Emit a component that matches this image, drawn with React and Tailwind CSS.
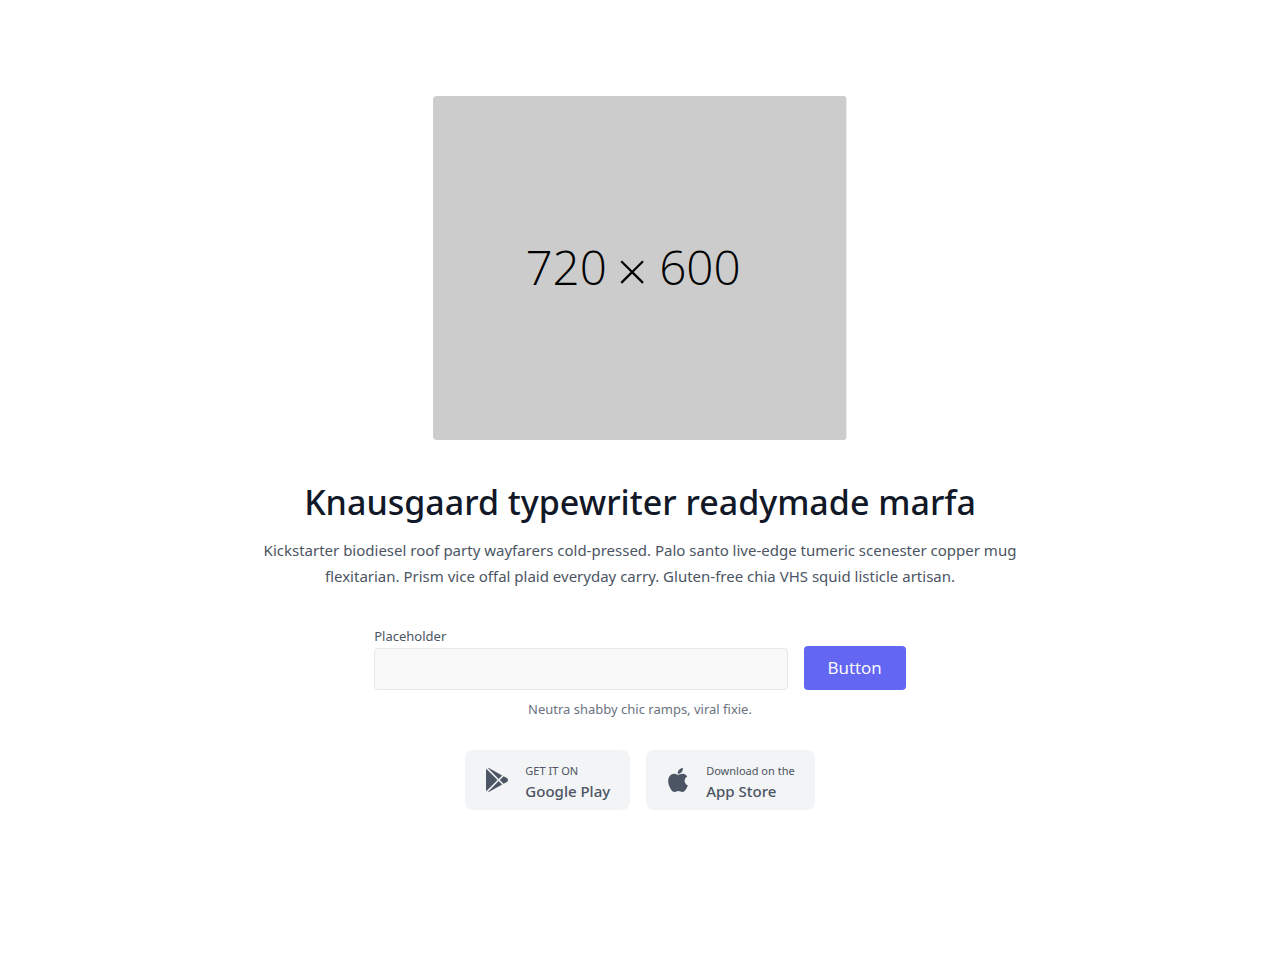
import React from "react";

function PlaceholderImage() {
  return (
    <svg
      viewBox="0 0 720 600"
      role="img"
      aria-label="hero"
      className="mb-10 block w-5/6 rounded md:w-3/6 lg:w-2/6"
    >
      <rect width="720" height="600" fill="#cccccc" />
      <g fontSize="83" fill="#000000" className="font-['Open_Sans','Noto_Sans',sans-serif] font-light">
        <text x="161" y="330">
          720
        </text>
        <text x="347" y="339" fontSize="94" textAnchor="middle">
          ×
        </text>
        <text x="536" y="330" textAnchor="end">
          600
        </text>
      </g>
    </svg>
  );
}

function GooglePlayIcon() {
  return (
    <svg viewBox="0 0 512 512" fill="currentColor" className="h-6 w-6 shrink-0" aria-hidden="true">
      <path d="M99.617 8.057a50.191 50.191 0 00-38.815-6.713l230.932 230.933 74.846-74.846L99.617 8.057zM32.139 20.116c-6.441 8.563-10.148 19.077-10.148 30.199v411.358c0 11.123 3.708 21.636 10.148 30.199l235.877-235.877L32.139 20.116zM464.261 212.087l-67.266-37.637-81.544 81.544 81.548 81.548 67.273-37.64c16.117-9.03 25.738-25.442 25.738-43.908s-9.621-34.877-25.749-43.907zM291.733 279.711L60.815 510.629c3.786.891 7.639 1.371 11.492 1.371a50.275 50.275 0 0027.31-8.07l266.965-149.372-74.849-74.847z" />
    </svg>
  );
}

function AppleIcon() {
  return (
    <svg viewBox="0 0 305 305" fill="currentColor" className="h-6 w-6 shrink-0" aria-hidden="true">
      <path d="M40.74 112.12c-25.79 44.74-9.4 112.65 19.12 153.82C74.09 286.52 88.5 305 108.24 305c.37 0 .74 0 1.13-.02 9.27-.37 15.97-3.23 22.45-5.99 7.27-3.1 14.8-6.3 26.6-6.3 11.22 0 18.39 3.1 25.31 6.1 6.83 2.95 13.87 6 24.26 5.81 22.23-.41 35.88-20.35 47.92-37.94a168.18 168.18 0 0021-43l.09-.28a2.5 2.5 0 00-1.33-3.06l-.18-.08c-3.92-1.6-38.26-16.84-38.62-58.36-.34-33.74 25.76-51.6 31-54.84l.24-.15a2.5 2.5 0 00.7-3.51c-18-26.37-45.62-30.34-56.73-30.82a50.04 50.04 0 00-4.95-.24c-13.06 0-25.56 4.93-35.61 8.9-6.94 2.73-12.93 5.09-17.06 5.09-4.64 0-10.67-2.4-17.65-5.16-9.33-3.7-19.9-7.9-31.1-7.9l-.79.01c-26.03.38-50.62 15.27-64.18 38.86z" />
      <path d="M212.1 0c-15.76.64-34.67 10.35-45.97 23.58-9.6 11.13-19 29.68-16.52 48.38a2.5 2.5 0 002.29 2.17c1.06.08 2.15.12 3.23.12 15.41 0 32.04-8.52 43.4-22.25 11.94-14.5 17.99-33.1 16.16-49.77A2.52 2.52 0 00212.1 0z" />
    </svg>
  );
}

function StoreButton({ icon, caption, name }) {
  return (
    <button type="button" className="inline-flex items-center rounded-lg bg-gray-100 px-5 py-[9px] text-[#4b5563]">
      {icon}
      <span className="ml-4 flex flex-col items-start pt-0.5">
        <span className="text-[11px]/5">{caption}</span>
        <span className="text-[15px]/5 font-medium">{name}</span>
      </span>
    </button>
  );
}

export default function App() {
  return (
    <section className="bg-white font-['Noto_Sans','Open_Sans',sans-serif] text-[#4b5563]">
      <div className="mx-auto flex max-w-7xl flex-col items-center justify-center px-5 py-24">
        <PlaceholderImage />
        <div className="flex w-full flex-col items-center text-center lg:w-2/3">
          <h1 className="mb-[13px] text-3xl font-medium text-[#111827] sm:text-[34px]/[44px]">
            Knausgaard typewriter readymade marfa
          </h1>
          <p className="mb-[31px] px-4 text-[15px]/[26px]">
            Kickstarter biodiesel roof party wayfarers cold-pressed. Palo santo live-edge tumeric
            scenester copper mug flexitarian. Prism vice offal plaid everyday carry. Gluten-free chia
            VHS squid listicle artisan.
          </p>
          <form className="flex w-full items-end justify-center" onSubmit={(e) => e.preventDefault()}>
            <div className="mr-4 w-1/2 text-left">
              <label htmlFor="hero-field" className="block pt-1 text-[13px]/6">
                Placeholder
              </label>
              <input
                type="text"
                id="hero-field"
                name="hero-field"
                className="block w-full rounded border border-[#e5e7eb] bg-[#f9f9f9] px-3 py-1 text-base/8 outline-none focus:border-indigo-500"
              />
            </div>
            <button
              type="submit"
              className="rounded bg-[#6366f1] px-6 py-2 font-['Open_Sans','Noto_Sans',sans-serif] text-[17px]/7 text-white"
            >
              Button
            </button>
          </form>
          <p className="mt-[9px] mb-[31px] w-full text-[13px]/5 text-[#6b7280]">
            Neutra shabby chic ramps, viral fixie.
          </p>
          <div className="flex flex-wrap justify-center gap-4">
            <StoreButton icon={<GooglePlayIcon />} caption="GET IT ON" name="Google Play" />
            <StoreButton icon={<AppleIcon />} caption="Download on the" name="App Store" />
          </div>
        </div>
      </div>
    </section>
  );
}
